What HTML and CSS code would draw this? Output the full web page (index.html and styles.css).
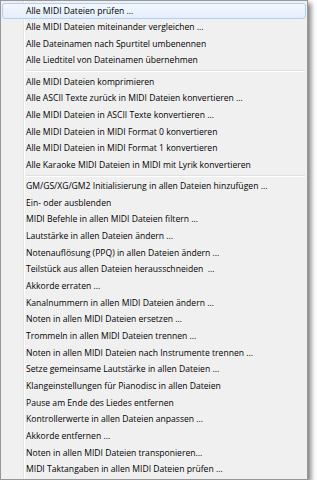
FILE: index.html
```html
<!DOCTYPE html>
<html lang="de">
<head>
<meta charset="utf-8">
<title>Menü</title>
<link rel="stylesheet" href="styles.css">
</head>
<body>
<div class="menu">
  <div class="item hover">Alle MIDI Dateien prüfen ...</div>
  <div class="item">Alle MIDI Dateien miteinander vergleichen ...</div>
  <div class="item">Alle Dateinamen nach Spurtitel umbenennen</div>
  <div class="item">Alle Liedtitel von Dateinamen übernehmen</div>
  <div class="sep"></div>
  <div class="item">Alle MIDI Dateien komprimieren</div>
  <div class="item">Alle ASCII Texte zurück in MIDI Dateien konvertieren ...</div>
  <div class="item">Alle MIDI Dateien in ASCII Texte konvertieren ...</div>
  <div class="item">Alle MIDI Dateien in MIDI Format 0 konvertieren</div>
  <div class="item">Alle MIDI Dateien in MIDI Format 1 konvertieren</div>
  <div class="item">Alle Karaoke MIDI Dateien in MIDI mit Lyrik konvertieren</div>
  <div class="sep"></div>
  <div class="item">GM/GS/XG/GM2 Initialisierung in allen Dateien hinzufügen ...</div>
  <div class="item">Ein- oder ausblenden</div>
  <div class="item">MIDI Befehle in allen MIDI Dateien filtern ...</div>
  <div class="item">Lautstärke in allen Dateien ändern ...</div>
  <div class="item">Notenauflösung (PPQ) in allen Dateien ändern ...</div>
  <div class="item">Teilstück aus allen Dateien herausschneiden &nbsp;...</div>
  <div class="item">Akkorde erraten ...</div>
  <div class="item">Kanalnummern in allen MIDI Dateien ändern ...</div>
  <div class="item">Noten in allen MIDI Dateien ersetzen ...</div>
  <div class="item">Trommeln in allen MIDI Dateien trennen ...</div>
  <div class="item">Noten in allen MIDI Dateien nach Instrumente trennen ...</div>
  <div class="item">Setze gemeinsame Lautstärke in allen Dateien ...</div>
  <div class="item">Klangeinstellungen für Pianodisc in allen Dateien</div>
  <div class="item">Pause am Ende des Liedes entfernen</div>
  <div class="item">Kontrollerwerte in allen Dateien anpassen ...</div>
  <div class="item">Akkorde entfernen ...</div>
  <div class="item">Noten in allen MIDI Dateien transponieren...</div>
  <div class="item">MIDI Taktangaben in allen MIDI Dateien prüfen ...</div>
</div>
</body>
</html>
```
FILE: styles.css
```css
html, body {
  margin: 0;
  padding: 0;
  background: #ffffff;
}
body {
  font-family: "Open Sans", "Noto Sans", sans-serif;
  font-size: 8.6px;
  color: #000;
}
.menu {
  width: 308px;
  box-sizing: border-box;
  border: 1px solid #979797;
  background-color: #f0f0f0;
  background-image: linear-gradient(to right, transparent 22px, #e2e3e3 22px, #e2e3e3 23px, #ffffff 23px, #ffffff 24px, transparent 24px);
  box-shadow: 3px 3px 5px rgba(0, 0, 0, 0.5);
  padding: 1.5px 1px;
  display: flex;
  flex-direction: column;
}
.item {
  flex: 0 0 16.67px;
  height: 16.67px;
  line-height: 14.67px;
  padding-left: 23px;
  white-space: nowrap;
  box-sizing: border-box;
  border: 1px solid transparent;
  border-radius: 3px;
}
.item.hover {
  border-color: #aecff7;
  background: linear-gradient(to bottom, #f2f7fd, #e4eefb);
}
.sep {
  flex: 0 0 4.5px;
  height: 4.5px;
  margin-left: 24px;
  margin-right: 1px;
  background: linear-gradient(to bottom, transparent 1.5px, #e0e0e0 1.5px, #e0e0e0 2.5px, #ffffff 2.5px, #ffffff 3.5px, transparent 3.5px);
}
```
